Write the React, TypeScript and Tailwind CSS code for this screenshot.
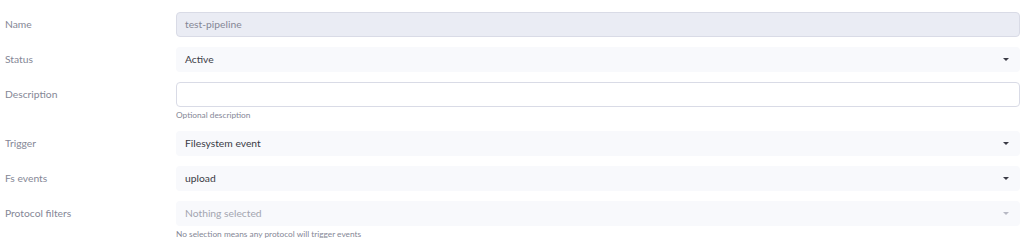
import React from "react";

const Caret = ({ light }: { light?: boolean }) => (
  <svg width="6" height="3" viewBox="0 0 6 3" className={light ? "text-[#b7b9c4]" : "text-[#3a3b45]"}>
    <path d="M0 0h6L3 3z" fill="currentColor" />
  </svg>
);

const Label = ({ children }: { children: React.ReactNode }) => (
  <div className="w-[176px] shrink-0 pl-[5px] text-[10.3px] leading-[25px] text-[#858796]">{children}</div>
);

const Select = ({ value, placeholder }: { value: string; placeholder?: boolean }) => (
  <div className="flex h-[25px] items-center justify-between rounded-[4px] bg-[#f8f9fc] pl-[9px] pr-[11px]">
    <span className={`text-[10.3px] ${placeholder ? "text-[#a3a5b0]" : "text-[#3a3b45]"}`}>{value}</span>
    <Caret light={placeholder} />
  </div>
);

export default function App() {
  return (
    <div
      className="flex w-[1024px] flex-col bg-white pt-[12px] pr-[4px]"
      style={{ fontFamily: 'Lato, "Open Sans", sans-serif' }}
    >
      <div className="flex">
        <Label>Name</Label>
        <div className="flex-1">
          <div className="flex h-[25px] items-center rounded-[4px] border border-[#d9dbe6] bg-[#eaecf4] pl-[8px] text-[10.3px] text-[#858796]">
            test-pipeline
          </div>
        </div>
      </div>
      <div className="mt-[10px] flex">
        <Label>Status</Label>
        <div className="flex-1">
          <Select value="Active" />
        </div>
      </div>
      <div className="mt-[10px] flex">
        <Label>Description</Label>
        <div className="flex-1">
          <div className="h-[25px] rounded-[4px] border border-[#d9dbe6] bg-white" />
          <div className="mt-[3px] text-[8.3px] leading-[11px] text-[#858796]">Optional description</div>
        </div>
      </div>
      <div className="mt-[10px] flex">
        <Label>Trigger</Label>
        <div className="flex-1">
          <Select value="Filesystem event" />
        </div>
      </div>
      <div className="mt-[10px] flex">
        <Label>Fs events</Label>
        <div className="flex-1">
          <Select value="upload" />
        </div>
      </div>
      <div className="mt-[10px] flex">
        <Label>Protocol filters</Label>
        <div className="flex-1">
          <Select value="Nothing selected" placeholder />
          <div className="mt-[3px] text-[8.3px] leading-[11px] text-[#858796]">
            No selection means any protocol will trigger events
          </div>
        </div>
      </div>
    </div>
  );
}
